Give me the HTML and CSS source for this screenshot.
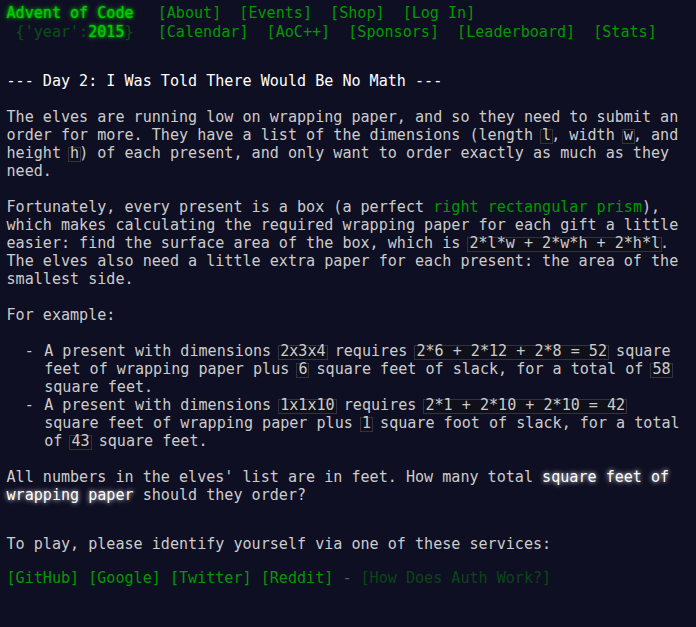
FILE: index.html
```html
<!DOCTYPE html>
<html lang="en">
<head>
<meta charset="utf-8">
<title>Day 2 - Advent of Code 2015</title>
<link rel="stylesheet" href="styles.css">
</head>
<body>
<header>
  <div class="row">
    <h1 class="title-global"><a href="#">Advent of Code</a></h1>
    <nav>
      <ul>
        <li><a href="#">[About]</a></li>
        <li><a href="#">[Events]</a></li>
        <li><a href="#">[Shop]</a></li>
        <li><a href="#">[Log In]</a></li>
      </ul>
    </nav>
  </div>
  <div class="row row-event">
    <h1 class="title-event">&nbsp;<span class="title-event-wrap">{'year':</span><a href="#">2015</a><span class="title-event-wrap">}</span></h1>
    <nav>
      <ul>
        <li><a href="#">[Calendar]</a></li>
        <li><a href="#">[AoC++]</a></li>
        <li><a href="#">[Sponsors]</a></li>
        <li><a href="#">[Leaderboard]</a></li>
        <li><a href="#">[Stats]</a></li>
      </ul>
    </nav>
  </div>
</header>
<main>
  <article class="day-desc">
    <h2>--- Day 2: I Was Told There Would Be No Math ---</h2>
    <p>The elves are running low on wrapping paper, and so they need to submit an order for more. They have a list of the dimensions (length <code>l</code>, width <code>w</code>, and height <code>h</code>) of each present, and only want to order exactly as much as they need.</p>
    <p>Fortunately, every present is a box (a perfect <a href="#">right rectangular prism</a>), which makes calculating the required wrapping paper for each gift a little easier: find the surface area of the box, which is <code>2*l*w + 2*w*h + 2*h*l</code>. The elves also need a little extra paper for each present: the area of the smallest side.</p>
    <p>For example:</p>
    <ul>
      <li>A present with dimensions <code>2x3x4</code> requires <code>2*6 + 2*12 + 2*8 = 52</code> square feet of wrapping paper plus <code>6</code> square feet of slack, for a total of <code>58</code> square feet.</li>
      <li>A present with dimensions <code>1x1x10</code> requires <code>2*1 + 2*10 + 2*10 = 42</code> square feet of wrapping paper plus <code>1</code> square foot of slack, for a total of <code>43</code> square feet.</li>
    </ul>
    <p>All numbers in the elves' list are in feet. How many total <em>square feet of wrapping paper</em> should they order?</p>
  </article>
  <p class="play">To play, please identify yourself via one of these services:</p>
  <p class="services"><a href="#">[GitHub]</a> <a href="#">[Google]</a> <a href="#">[Twitter]</a> <a href="#">[Reddit]</a> <span class="quiet">-</span> <a href="#" class="quiet">[How Does Auth Work?]</a></p>
</main>
</body>
</html>
```

FILE: styles.css
```css
html, body {
  background: #0f0f23;
}
body {
  margin: 0;
  padding: 4px 0 0 6.5px;
  color: #cccccc;
  font-family: "DejaVu Sans Mono", "Liberation Mono", monospace;
  font-size: 15.08px;
  line-height: 18px;
}
a {
  color: #009900;
  text-decoration: none;
}
header .row {
  display: flex;
  align-items: baseline;
}
header .row-event {
  margin-top: 1px;
}
header h1 {
  margin: 0;
  padding-right: 1em;
  font-size: 1em;
  font-weight: normal;
  line-height: 18px;
  white-space: nowrap;
}
header h1 a,
.title-event a {
  color: #00cc00;
  text-shadow: 0 0 2px #00cc00, 0 0 5px #00cc00;
}
.title-event-wrap {
  color: #00cc00;
  opacity: 0.33;
}
header nav ul {
  display: flex;
  list-style: none;
  margin: 0;
  padding: 0;
}
header nav li {
  padding: 0 0.6em;
  white-space: nowrap;
}
main {
  width: 45em;
}
.day-desc h2 {
  margin: 31px 0 13px;
  font-size: 1em;
  font-weight: normal;
  color: #ffffff;
  white-space: nowrap;
}
.day-desc p {
  margin: 18px 0;
}
.day-desc ul {
  list-style: none;
  margin: 16px 0 18px;
  padding: 0;
}
.day-desc li {
  position: relative;
  padding-left: 2.5em;
}
.day-desc li::before {
  content: "\00a0\00a0-\00a0";
  position: absolute;
  left: 0;
}
code {
  position: relative;
  z-index: 0;
  display: inline-block;
  margin: 0;
  padding: 0;
  font: inherit;
}
code::before {
  content: "";
  position: absolute;
  z-index: -1;
  left: -2px;
  right: -2px;
  top: 3px;
  bottom: 0;
  border: 1px solid #333340;
  background: #10101a;
}
em {
  font-style: normal;
  color: #ffffff;
  text-shadow: 0 0 5px #ffffff;
}
.day-desc {
  margin-bottom: 31.3px;
}
p.play {
  margin: 0;
}
p.services {
  margin: 16px 0 0;
}
.quiet {
  opacity: 0.4;
}
```
